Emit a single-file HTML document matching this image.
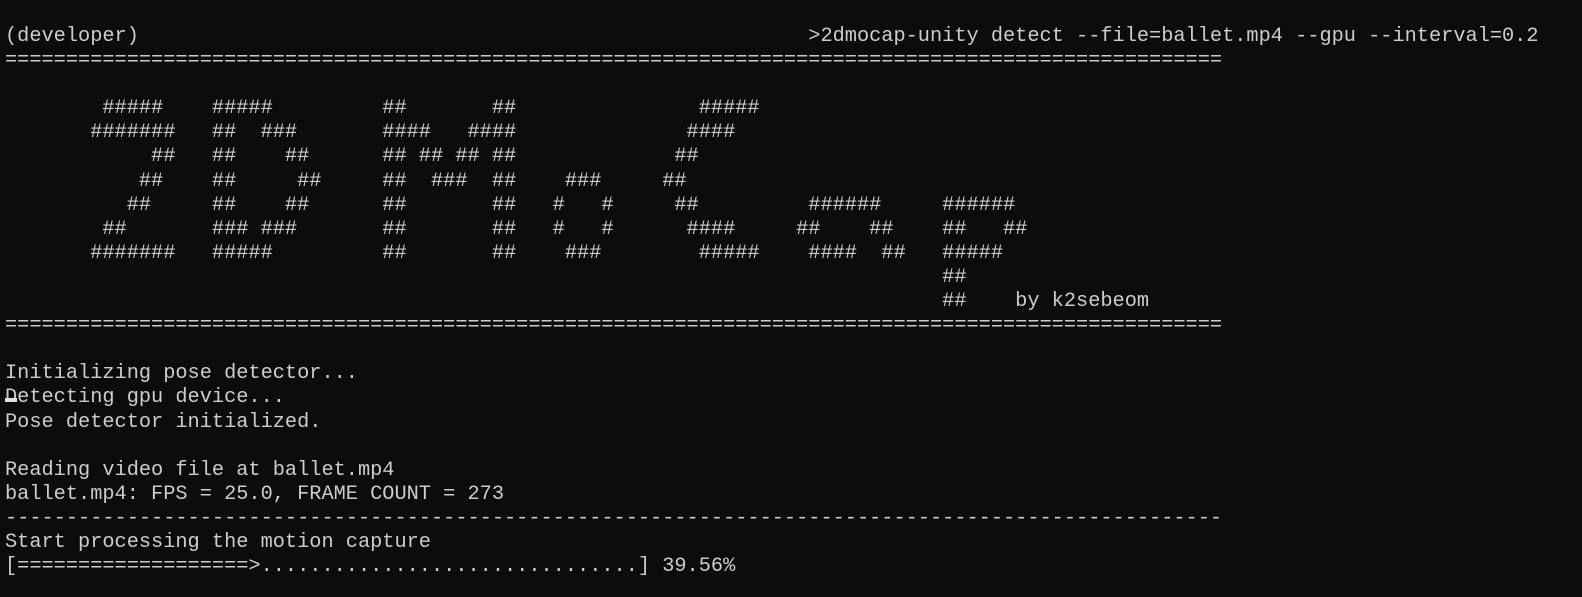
<!DOCTYPE html>
<html><head><meta charset="utf-8">
<style>
html,body{margin:0;padding:0;background:#0c0c0c;}
body{width:1582px;height:597px;overflow:hidden;position:relative;}
pre{position:absolute;left:5px;top:25px;margin:0;font-family:"Liberation Mono","DejaVu Sans Mono",monospace;font-size:20.3px;line-height:24.09px;color:#cccccc;white-space:pre;}
.cur{position:absolute;left:5px;top:398px;width:12px;height:4px;background:#e0e0e0;}
</style></head><body>
<pre>(developer)                                                       &gt;2dmocap-unity detect --file=ballet.mp4 --gpu --interval=0.2
====================================================================================================

        #####    #####         ##       ##               #####
       #######   ##  ###       ####   ####              ####
            ##   ##    ##      ## ## ## ##             ##
           ##    ##     ##     ##  ###  ##    ###     ##
          ##     ##    ##      ##       ##   #   #     ##         ######     ######
        ##       ### ###       ##       ##   #   #      ####     ##    ##    ##   ##
       #######   #####         ##       ##    ###        #####    ####  ##   #####
                                                                             ##
                                                                             ##    by k2sebeom
====================================================================================================

Initializing pose detector...
Detecting gpu device...
Pose detector initialized.

Reading video file at ballet.mp4
ballet.mp4: FPS = 25.0, FRAME COUNT = 273
----------------------------------------------------------------------------------------------------
Start processing the motion capture
[===================&gt;...............................] 39.56%</pre>
<div class="cur"></div>
</body></html>
